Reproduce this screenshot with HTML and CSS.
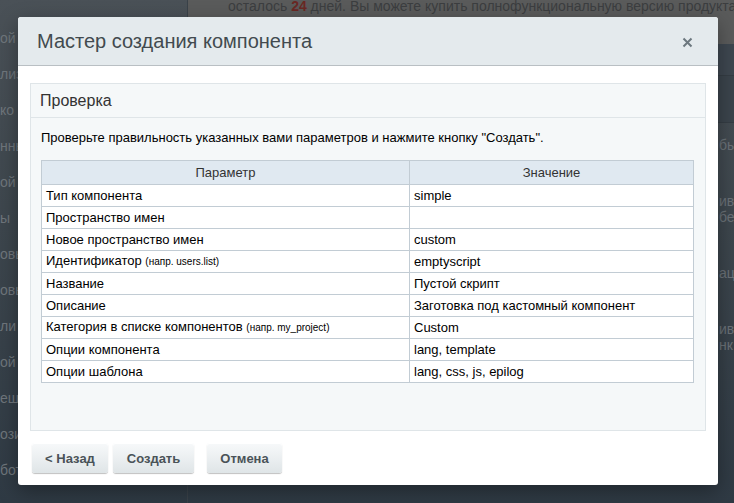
FILE: index.html
```html
<!DOCTYPE html>
<html lang="ru">
<head>
<meta charset="utf-8">
<title>Мастер создания компонента</title>
<link rel="stylesheet" href="styles.css">
</head>
<body>
<div class="page">
  <aside class="side">
    <div class="side-item">ой</div>
    <div class="side-item">лиз</div>
    <div class="side-item">ко Т</div>
    <div class="side-item">нны</div>
    <div class="side-item">ой</div>
    <div class="side-item">ы</div>
    <div class="side-item">овы</div>
    <div class="side-item">овы</div>
    <div class="side-item">ли</div>
    <div class="side-item">ой</div>
    <div class="side-item">еш</div>
    <div class="side-item">ози</div>
    <div class="side-item">бот</div>
  </aside>
  <main class="main">
    <div class="banner">осталось <b class="red">24</b> дней. Вы можете купить полнофункциональную версию продукта по ад</div>
    <div class="band band1"></div>
    <div class="band band2"></div>
    <div class="main-rows">
      <div class="mrow">бы</div>
      <div class="mrow tall">ив<br>бе</div>
      <div class="mrow">ац</div>
      <div class="mrow tall">ив<br>нк</div>
    </div>
  </main>
</div>

<div class="dialog">
  <div class="dlg-head">
    <span class="dlg-title">Мастер создания компонента</span>
    <span class="dlg-close">
      <svg width="11" height="11" viewBox="0 0 11 11"><path d="M1.5 1.5 L9.5 9.5 M9.5 1.5 L1.5 9.5" stroke="#6c777e" stroke-width="2" fill="none"/></svg>
    </span>
  </div>
  <div class="dlg-body">
    <section class="panel">
      <div class="panel-title">Проверка</div>
      <div class="panel-content">
        <p class="hint">Проверьте правильность указанных вами параметров и нажмите кнопку "Создать".</p>
        <table class="params">
          <thead>
            <tr><th class="c1">Параметр</th><th>Значение</th></tr>
          </thead>
          <tbody>
            <tr><td>Тип компонента</td><td>simple</td></tr>
            <tr><td>Пространство имен</td><td></td></tr>
            <tr><td>Новое пространство имен</td><td>custom</td></tr>
            <tr><td>Идентификатор <small>(напр. users.list)</small></td><td>emptyscript</td></tr>
            <tr><td>Название</td><td>Пустой скрипт</td></tr>
            <tr><td>Описание</td><td>Заготовка под кастомный компонент</td></tr>
            <tr><td>Категория в списке компонентов <small>(напр. my_project)</small></td><td>Custom</td></tr>
            <tr><td>Опции компонента</td><td>lang, template</td></tr>
            <tr><td>Опции шаблона</td><td>lang, css, js, epilog</td></tr>
          </tbody>
        </table>
      </div>
    </section>
    <div class="buttons">
      <button class="btn btn-back">&lt; Назад</button>
      <button class="btn btn-create">Создать</button>
      <button class="btn btn-cancel">Отмена</button>
    </div>
  </div>
</div>
</body>
</html>
```

FILE: styles.css
```css
html, body {
  margin: 0;
  padding: 0;
}
body {
  width: 734px;
  height: 503px;
  overflow: hidden;
  position: relative;
  font-family: "Liberation Sans", Arial, sans-serif;
  background: #323c45;
}
.page {
  display: grid;
  grid-template-columns: 188px 1fr;
  height: 503px;
  background: linear-gradient(180deg, #4a5157 0%, #3d464d 45%, #2f3a44 100%);
}
.side {
  border-right: 1px solid #3a4249;
  padding-top: 30px;
  display: flex;
  flex-direction: column;
  gap: 20px;
  overflow: hidden;
}
.side-item {
  font-size: 14px;
  line-height: 16px;
  color: #6f767c;
  white-space: nowrap;
}
.main {
  display: flex;
  flex-direction: column;
  overflow: hidden;
}
.banner {
  height: 44px;
  background: #5a5b5b;
  color: #3c3e40;
  font-size: 14px;
  line-height: 13px;
  padding: 0 0 0 40px;
  white-space: nowrap;
  overflow: hidden;
}
.red { color: #6a2824; }
.band {
  border-bottom: 1px solid #353d44;
}
.band1 { height: 31px; background: #3e4750; }
.band2 { height: 46px; background: #3b444c; }
.main-rows {
  display: flex;
  flex-direction: column;
  gap: 40px;
  padding-top: 14px;
  align-items: flex-end;
}
.mrow {
  font-size: 14px;
  line-height: 16px;
  color: #6a7177;
  width: 15px;
  white-space: nowrap;
}

/* dialog */
.dialog {
  position: absolute;
  left: 18px;
  top: 17px;
  width: 700px;
  height: 468px;
  background: #fff;
  border-radius: 3px;
  box-shadow: 0 6px 20px rgba(0, 0, 0, 0.35);
  display: flex;
  flex-direction: column;
  overflow: hidden;
}
.dlg-head {
  height: 48px;
  background: #e4eaed;
  border-bottom: 1px solid #b9bfc3;
  display: flex;
  align-items: center;
  justify-content: space-between;
  padding: 0 24px 0 19px;
  flex-shrink: 0;
}
.dlg-title {
  font-size: 20px;
  color: #424a4f;
  padding-top: 1px;
}
.dlg-close {
  display: flex;
  padding-top: 3px;
  margin-right: 1px;
}
.dlg-body {
  flex: 1;
  padding: 17px 12px 12px 12px;
  display: flex;
  flex-direction: column;
}
.panel {
  height: 346px;
  border: 1px solid #dfe5e8;
  background: #f5f8f9;
  display: flex;
  flex-direction: column;
}
.panel-title {
  height: 33px;
  border-bottom: 1px solid #dfe5e8;
  font-size: 16px;
  line-height: 33px;
  color: #333;
  padding-left: 9px;
}
.panel-content {
  padding: 12px 11px 0 10px;
}
.hint {
  margin: 0 0 14px 0;
  font-size: 13px;
  line-height: 16px;
  color: #000;
}
.params {
  width: 653px;
  border-collapse: collapse;
  background: #fff;
  font-size: 13px;
  color: #000;
}
.params th {
  height: 23px;
  background: #e0e9f1;
  border: 1px solid #c2ccd4;
  font-weight: normal;
  color: #333;
  padding: 0;
}
.params th.c1 { width: 367px; }
.params td {
  height: 21px;
  border: 1px solid #c2ccd4;
  padding: 0 4px;
  line-height: 16px;
}
.params small {
  font-size: 10px;
}
.buttons {
  margin-top: 12px;
  display: flex;
  gap: 5px;
  padding-left: 2px;
}
.btn {
  height: 30px;
  border: none;
  border-radius: 3px;
  background: linear-gradient(180deg, #f7f9fa 0%, #e9edef 60%, #dfe5e7 100%);
  box-shadow: 0 1px 1px rgba(0, 0, 0, 0.25), inset 0 1px 0 #fff;
  font-family: "Liberation Sans", Arial, sans-serif;
  font-size: 13px;
  font-weight: bold;
  color: #4a5358;
  padding: 0;
  cursor: pointer;
}
.btn-back { width: 76px; }
.btn-create { width: 81px; }
.btn-cancel { width: 75px; margin-left: 8px; }
```
